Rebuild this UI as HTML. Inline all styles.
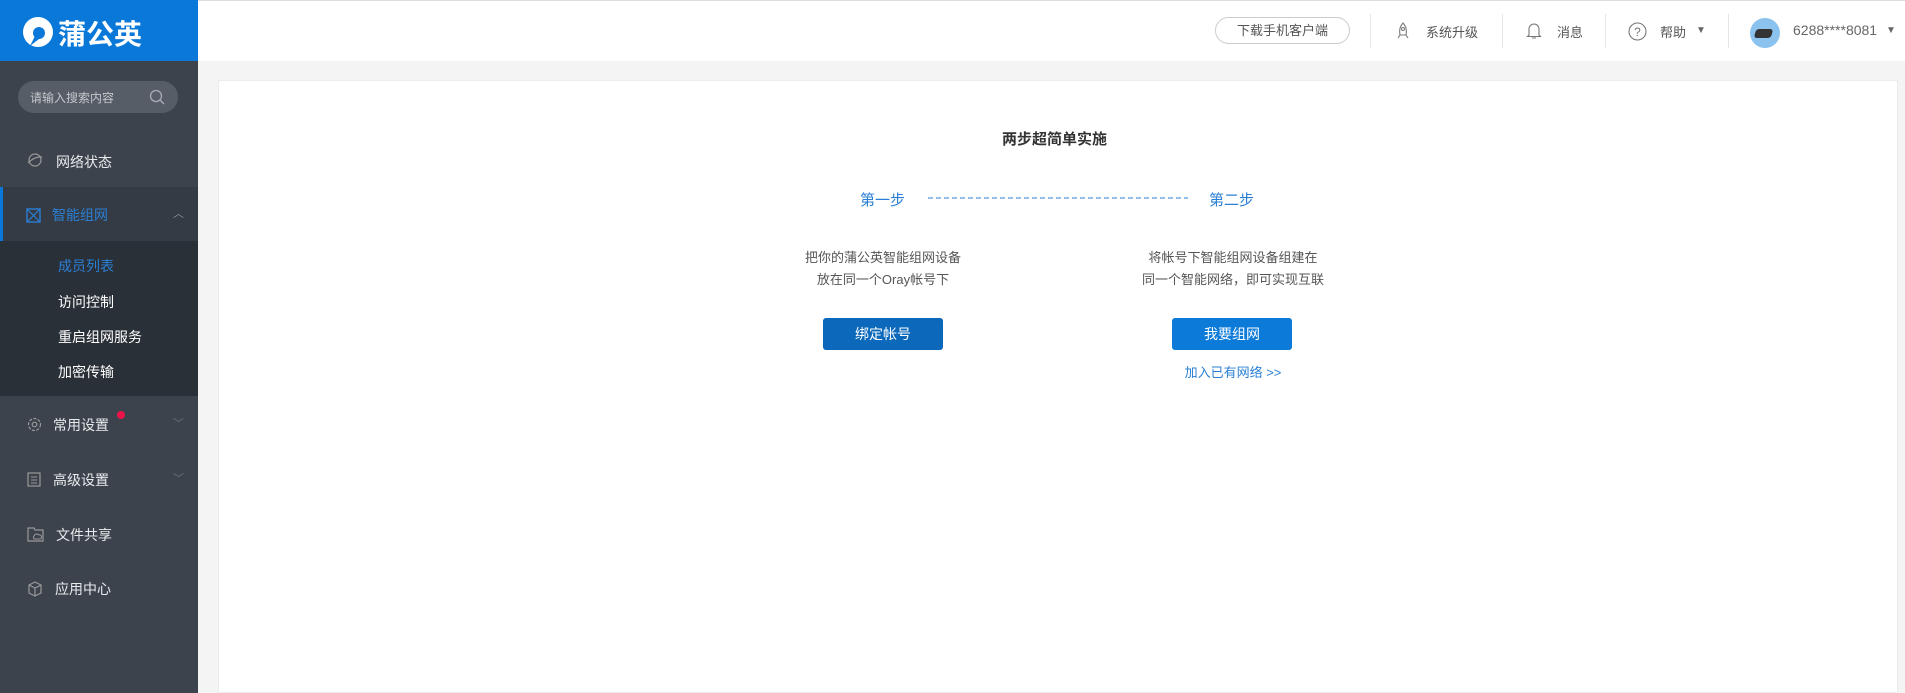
<!DOCTYPE html>
<html><head><meta charset="utf-8"><style>
*{margin:0;padding:0;box-sizing:border-box}
body{width:1905px;height:693px;overflow:hidden;background:#f4f4f4;font-family:"Liberation Sans","Noto Sans CJK SC",sans-serif;position:relative}
.a{position:absolute;white-space:nowrap}
.side{position:absolute;left:0;top:0;width:198px;height:693px;background:#3c434d}
.logo{position:absolute;left:0;top:0;width:198px;height:61px;background:#0a78d8}
.top{position:absolute;left:198px;top:0;width:1707px;height:61px;background:#fff;border-top:1px solid #ddd}
.card{position:absolute;left:218px;top:80px;width:1680px;height:613px;background:#fff;border:1px solid #ececec}
.mi{color:#e8eaec;font-size:14px}
.sub{color:#fff;font-size:14px}
.sep{position:absolute;top:14px;width:1px;height:34px;background:#e6e6e6}
.tx{color:#555;font-size:13px}
.btn{position:absolute;width:120px;height:32px;border-radius:3px;color:#fff;font-size:14px;text-align:center;line-height:32px}
</style></head><body>
<div class="side"></div>
<div class="logo">
<svg class="a" style="left:22px;top:16px" width="32" height="32" viewBox="0 0 32 32"><circle cx="16" cy="16" r="15" fill="#fff"/><circle cx="17" cy="17" r="6" fill="#0a78d8"/><path d="M8 30 L13 20 L17 23 Z" fill="#0a78d8"/></svg>
<div class="a" style="left:58px;top:13px;color:#fff;font-size:28px;font-weight:bold">蒲公英</div>
</div>
<div class="a" style="left:18px;top:81px;width:160px;height:32px;border-radius:16px;background:#565d66"></div>
<div class="a" style="left:30px;top:89px;color:#c4c8cc;font-size:12px">请输入搜索内容</div>
<svg class="a" style="left:149px;top:89px" width="16" height="16" viewBox="0 0 16 16"><circle cx="7" cy="7" r="5.5" fill="none" stroke="#aab" stroke-width="1.3"/><path d="M11 11l4 4" stroke="#aab" stroke-width="1.3"/></svg>
<svg class="a" style="left:27px;top:152px" width="16" height="16" viewBox="0 0 16 16"><circle cx="8" cy="8" r="6" fill="none" stroke="#999" stroke-width="1.2"/><path d="M1 11 Q8 4 15 5" fill="none" stroke="#999" stroke-width="1.2"/></svg>
<div class="a mi" style="left:56px;top:152px">网络状态</div>
<div class="a" style="left:0;top:187px;width:198px;height:54px;background:#353b44"></div>
<div class="a" style="left:0;top:187px;width:3px;height:54px;background:#0a78d8"></div>
<svg class="a" style="left:26px;top:208px" width="15" height="15" viewBox="0 0 15 15"><rect x="1" y="1" width="13" height="13" fill="none" stroke="#2a7fd4" stroke-width="1.4"/><path d="M1 1l13 13M14 1L1 14" stroke="#2a7fd4" stroke-width="1.2"/></svg>
<div class="a" style="left:52px;top:205px;color:#2a7fd4;font-size:14px">智能组网</div>
<div class="a" style="left:173px;top:205px;color:#8a9099;font-size:11px">︿</div>
<div class="a" style="left:0;top:241px;width:198px;height:155px;background:#2a3038"></div>
<div class="a" style="left:58px;top:256px;color:#2a7fd4;font-size:14px">成员列表</div>
<div class="a sub" style="left:58px;top:292px">访问控制</div>
<div class="a sub" style="left:58px;top:327px">重启组网服务</div>
<div class="a sub" style="left:58px;top:362px">加密传输</div>
<svg class="a" style="left:27px;top:417px" width="15" height="15" viewBox="0 0 15 15"><circle cx="7.5" cy="7.5" r="6" fill="none" stroke="#999" stroke-width="1.2" stroke-dasharray="3 1.5"/><circle cx="7.5" cy="7.5" r="2.3" fill="none" stroke="#999" stroke-width="1.2"/></svg>
<div class="a mi" style="left:53px;top:415px">常用设置</div>
<div class="a" style="left:117px;top:411px;width:8px;height:8px;border-radius:4px;background:#f0134a"></div>
<div class="a" style="left:173px;top:415px;color:#6a7079;font-size:11px">﹀</div>
<svg class="a" style="left:27px;top:472px" width="14" height="15" viewBox="0 0 14 15"><rect x="1" y="1" width="12" height="13" fill="none" stroke="#999" stroke-width="1.2"/><path d="M4 5h6M4 8h6M4 11h6" stroke="#999"/></svg>
<div class="a mi" style="left:53px;top:470px">高级设置</div>
<div class="a" style="left:173px;top:470px;color:#6a7079;font-size:11px">﹀</div>
<svg class="a" style="left:27px;top:527px" width="17" height="15" viewBox="0 0 17 15"><path d="M1 1h6l1 2h8v11H1Z" fill="none" stroke="#999" stroke-width="1.2"/><path d="M7 12h6a2 2 0 0 0-1-4a3 3 0 0 0-5 1a2 2 0 0 0 0 3" fill="none" stroke="#999"/></svg>
<div class="a mi" style="left:56px;top:525px">文件共享</div>
<svg class="a" style="left:27px;top:581px" width="16" height="16" viewBox="0 0 16 16"><path d="M8 1l6 3v8l-6 3-6-3V4Z M2 4l6 3 6-3 M8 7v8" fill="none" stroke="#999" stroke-width="1.2"/></svg>
<div class="a mi" style="left:55px;top:579px">应用中心</div>

<div class="top"></div>
<div class="a" style="left:1215px;top:17px;width:135px;height:27px;border:1px solid #ccc;border-radius:14px;text-align:center;line-height:25px;font-size:13px;color:#555">下载手机客户端</div>
<div class="sep" style="left:1370px"></div><div class="sep" style="left:1502px"></div><div class="sep" style="left:1605px"></div><div class="sep" style="left:1728px"></div>
<svg class="a" style="left:1396px;top:22px" width="14" height="18" viewBox="0 0 14 18"><path d="M7 1C4 4 3 8 4 13h6c1-5 0-9-3-12Z M4 13l-2 3M10 13l2 3" fill="none" stroke="#777" stroke-width="1.1"/><circle cx="7" cy="7" r="1.5" fill="none" stroke="#777"/></svg>
<div class="a" style="left:1426px;top:22px;font-size:13px;color:#555">系统升级</div>
<svg class="a" style="left:1526px;top:21px" width="16" height="19" viewBox="0 0 16 19"><path d="M3 14V8a5 5 0 0 1 10 0v6l1.5 1.5h-13Z M6 17h4" fill="none" stroke="#777" stroke-width="1.1"/></svg>
<div class="a" style="left:1557px;top:22px;font-size:13px;color:#555">消息</div>
<svg class="a" style="left:1628px;top:22px" width="19" height="19" viewBox="0 0 19 19"><circle cx="9.5" cy="9.5" r="8.5" fill="none" stroke="#777" stroke-width="1.1"/><text x="9.5" y="14" font-size="12" text-anchor="middle" fill="#777" font-family="Liberation Sans">?</text></svg>
<div class="a" style="left:1660px;top:22px;font-size:13px;color:#555">帮助</div>
<div class="a" style="left:1696px;top:25px;font-size:10px;color:#666">▼</div>
<div class="a" style="left:1750px;top:18px;width:30px;height:30px;border-radius:15px;background:#8cc3ee"></div>
<div class="a" style="left:1755px;top:29px;width:17px;height:9px;border-radius:3px;background:#333;transform:skewX(-15deg)"></div>
<div class="a" style="left:1793px;top:22px;font-size:14px;color:#666">6288****8081</div>
<div class="a" style="left:1886px;top:25px;font-size:10px;color:#666">▼</div>

<div class="card"></div>
<div class="a" style="left:1002px;top:128px;font-size:15px;font-weight:bold;color:#333">两步超简单实施</div>
<div class="a" style="left:860px;top:189px;font-size:15px;color:#2a7fd4">第一步</div>
<svg class="a" style="left:928px;top:197px" width="260" height="2"><line x1="0" y1="1" x2="260" y2="1" stroke="#2a7fd4" stroke-width="1" stroke-dasharray="5 3"/></svg>
<div class="a" style="left:1209px;top:189px;font-size:15px;color:#2a7fd4">第二步</div>
<div class="a tx" style="left:783px;top:247px;width:200px;text-align:center;line-height:22px">把你的蒲公英智能组网设备<br>放在同一个Oray帐号下</div>
<div class="a tx" style="left:1113px;top:247px;width:240px;text-align:center;line-height:22px">将帐号下智能组网设备组建在<br>同一个智能网络，即可实现互联</div>
<div class="btn" style="left:823px;top:318px;background:#0b68bb">绑定帐号</div>
<div class="btn" style="left:1172px;top:318px;background:#0b7ad8">我要组网</div>
<div class="a" style="left:1133px;top:362px;width:200px;text-align:center;font-size:13px;color:#2a7fd4">加入已有网络 &gt;&gt;</div>
</body></html>
